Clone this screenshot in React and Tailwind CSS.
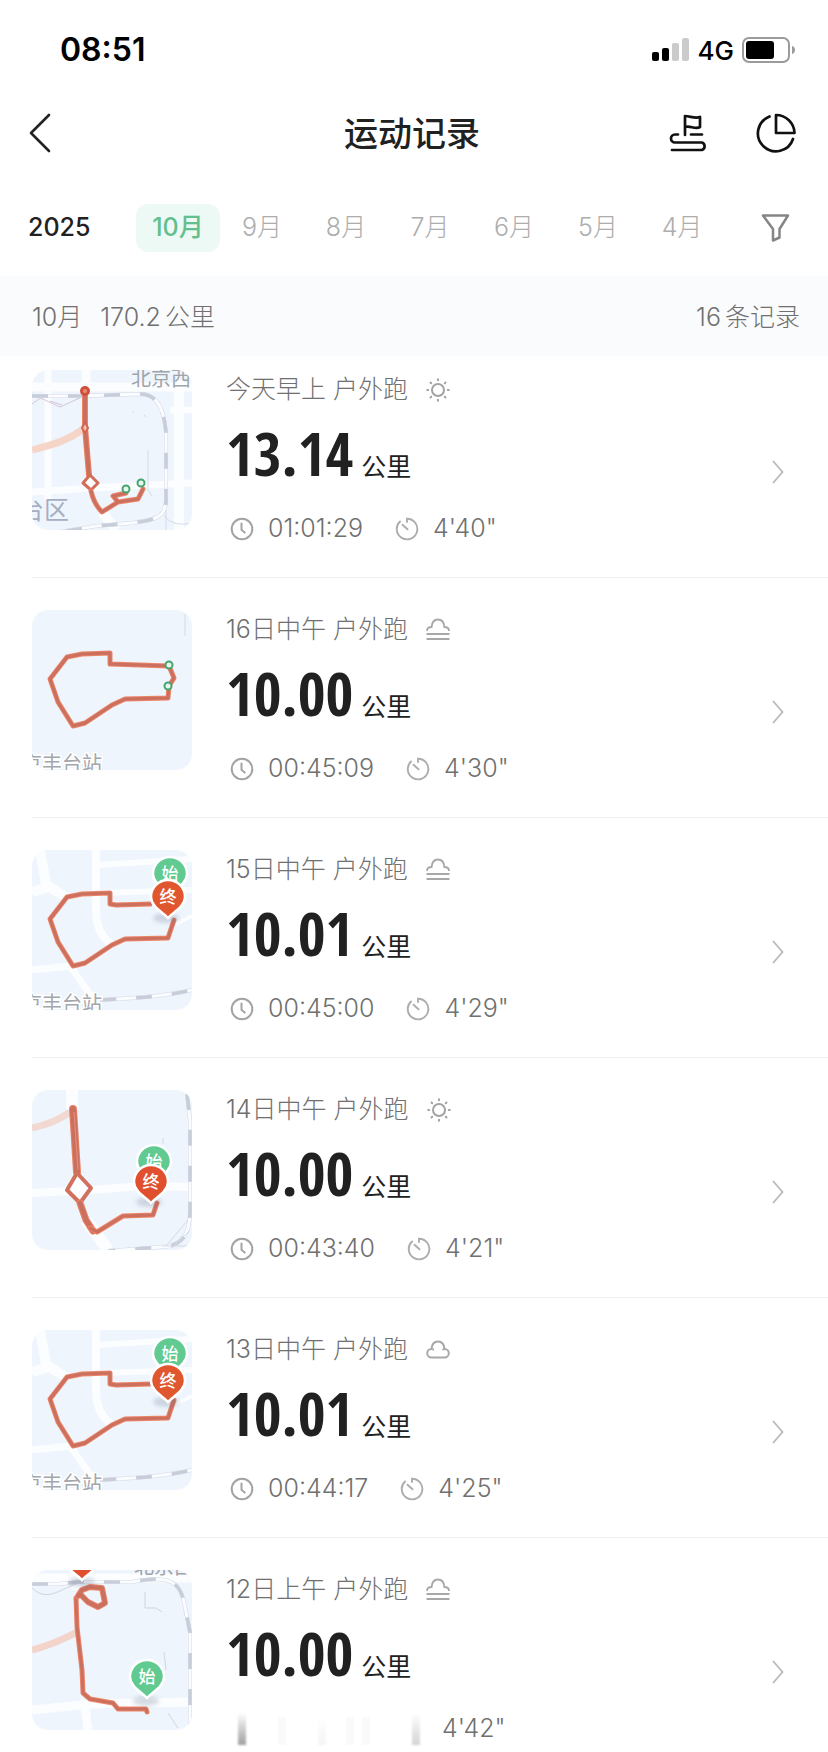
import React, { useState } from "react";

const MONTHS = ["10月", "9月", "8月", "7月", "6月", "5月", "4月"];

const LOOP =
  "M78 54V43L50 44L35 47L18 69L26 92L41 116L53 113L80 95L93 89L136 88";

const RECORDS = [
  { id: 1, when: "今天早上", weather: "sun", distance: "13.14", time: "01:01:29", pace: "4'40\"", map: "west" },
  { id: 2, when: "16日中午", weather: "haze", distance: "10.00", time: "00:45:09", pace: "4'30\"", map: "loopPlain" },
  { id: 3, when: "15日中午", weather: "haze", distance: "10.01", time: "00:45:00", pace: "4'29\"", map: "loop" },
  { id: 4, when: "14日中午", weather: "sun", distance: "10.00", time: "00:43:40", pace: "4'21\"", map: "south" },
  { id: 5, when: "13日中午", weather: "cloud", distance: "10.01", time: "00:44:17", pace: "4'25\"", map: "loopLow" },
  { id: 6, when: "12日上午", weather: "haze", distance: "10.00", time: null, pace: "4'42\"", map: "north" },
];

// -----------------------------
// Icons
// -----------------------------
function WeatherIcon({ type }) {
  if (type === "sun") {
    return (
      <svg className="size-6" viewBox="0 0 24 24" fill="none" stroke="#a3a3a3" strokeWidth="2" strokeLinecap="round">
        <circle cx="12" cy="12" r="6" />
        <path d="M12 1.2v1M12 21.8v1M1.2 12h1M21.8 12h1M4.5 4.5l.7.7M18.8 18.8l.7.7M19.5 4.5l-.7.7M5.2 18.8l-.7.7" />
      </svg>
    );
  }
  if (type === "cloud") {
    return (
      <svg className="size-6" viewBox="0 0 24 24" fill="none" stroke="#a8a8a8" strokeWidth="2" strokeLinejoin="round">
        <path d="M5.500 19.500a4.200 4.200 0 0 1 0-8.600C6 6 8.500 3.500 12 3.500S18 6 18.500 10.900a4.200 4.200 0 0 1 0 8.600ZM6.500 11.200l1.500.6M17.800 11.200l-1.300.6" />
      </svg>
    );
  }
  return (
    <svg className="size-6" viewBox="0 0 24 24" fill="none" stroke="#a8a8a8" strokeWidth="1.8">
      <path d="M1 13C1 10 3 9 5.600 9 6 4 8.500 1.500 12 1.500S18 4 18.400 9c2.600 0 4.600 1 4.600 4M.5 16h23M.5 21h23" />
    </svg>
  );
}

function ClockIcon() {
  return (
    <svg className="size-6" viewBox="0 0 24 24" fill="none" stroke="#a3a3a3" strokeWidth="2" strokeLinecap="round">
      <circle cx="12" cy="12" r="10.300" />
      <path d="M11.500 6.500v6.300l3.200 2.800" />
    </svg>
  );
}

function PaceIcon() {
  return (
    <svg className="size-6" viewBox="0 0 24 24" fill="none" stroke="#adadad" strokeWidth="1.900" strokeLinecap="round">
      <path d="M12 5V1.700A10.300 10.300 0 1 1 5 4.500M7.500 7.800l5 4.500" />
    </svg>
  );
}

// -----------------------------
// Map thumbnails
// -----------------------------
function Route({ d, width = 4 }) {
  return (
    <g fill="none" strokeLinecap="round" strokeLinejoin="round">
      <path d={d} stroke="#ec8468" strokeWidth={width + 1} />
      <path d={d} stroke="#cb705f" strokeWidth={width - 1} />
    </g>
  );
}

function Rail({ d }) {
  return (
    <g fill="none">
      <path d={d} stroke="#d3d8e3" strokeWidth="4" />
      <path d={d} stroke="#fbfcff" strokeWidth="3" />
      <path d={d} stroke="#c8cdda" strokeWidth="3.500" strokeDasharray="16 20" />
    </g>
  );
}

function Pin({ x, y, color, label }) {
  return (
    <g transform={`translate(${x} ${y})`}>
      <path
        d="M0 21C-4 16-17 10-17 0A17 17 0 0 1 17 0C17 10 4 16 0 21Z"
        fill={color}
        stroke="#fff"
        strokeWidth="2.500"
      />
      <text y="6" textAnchor="middle" fontSize="17" fontWeight="500" fill="#fff">
        {label}
      </text>
    </g>
  );
}

function Dot({ x, y }) {
  return <circle cx={x} cy={y} r="3.500" fill="#e6f7ec" stroke="#45a56f" strokeWidth="2" />;
}

function Shadow({ x, y }) {
  return <ellipse cx={x} cy={y} rx="13" ry="5" fill="#64748b" opacity=".25" className="blur-[2px]" />;
}

function StationLabel() {
  return (
    <text x="-10" y="161" fontSize="20" fill="#a3a6ab" stroke="#fff" strokeWidth="3" paintOrder="stroke">
      京丰台站
    </text>
  );
}

function LoopRoads() {
  return (
    <g fill="none" stroke="#fbfdff">
      <path d="M8 0L14 35L36 48M20 36L0 42" strokeWidth="10" />
      <path d="M64 0V60C64 80 72 90 82 96" strokeWidth="8" />
      <path d="M66 15L160 9M70 43L160 40" strokeWidth="6" />
      <path d="M0 120L38 116L62 150" strokeWidth="7" />
      <path d="M144 74L160 66" strokeWidth="4" />
    </g>
  );
}

function MapScene({ type }) {
  if (type === "west") {
    return (
      <>
        <g fill="none" stroke="#fcfdff">
          <path d="M0 17H160M54 0V25" strokeWidth="9" />
          <path d="M16 0V130M160 40H138M0 122L60 118L160 113" strokeWidth="7" />
          <path d="M147 10V160M70 142L84 160" strokeWidth="10" />
        </g>
        <path d="M0 80C20 75 38 70 52 58" fill="none" stroke="#f4d5c8" strokeWidth="7" />
        <path d="M0 24L28 37L52 26M0 34L14 24M18 31L30 35" fill="none" stroke="#d4c4d7" strokeWidth="1" />
        <Rail d="M0 26L48 26L108 24C128 24 132 44 134 62V130C134 148 122 150 100 153L64 156L28 162" />
        <path d="M132 145C138 155 150 155 160 153M134 140V160M100 41l2 2M112 45l2 2M116 80V120l4 6" fill="none" stroke="#d5dae6" strokeWidth="1" />
        <Route d="M53 21V57L57 105" width={5} />
        <path d="M58 105L66 113L59 120L51 113Z" fill="#fff" stroke="#d26d58" strokeWidth="3" strokeLinejoin="round" />
        <Route d="M59 121C61 130 65 137 70 142L86 132L106 129L111 119M86 132L81 126L94 123" width={4} />
        <circle cx="53" cy="21" r="3.500" fill="#e98d77" stroke="#cf4f3a" strokeWidth="3" />
        <path d="M53 52L56 58L53 63L50 58Z" fill="#f3c2b5" stroke="#d26550" strokeWidth="2" />
        <Dot x={94} y={119} />
        <Dot x={109} y={113} />
        <text x="99" y="16" fontSize="20" fill="#a0a4ab">北京西</text>
        <text x="-13" y="149" fontSize="25" fill="#a6aec2">台区</text>
      </>
    );
  }
  if (type === "loopPlain") {
    return (
      <>
        <Route d={LOOP + "L137 76L142 68L137 56L78 54"} />
        <path d="M153 4V26" stroke="#d5dae2" strokeWidth="1" />
        <Dot x={137} y={55} />
        <Dot x={136} y={76} />
        <StationLabel />
      </>
    );
  }
  if (type === "loop" || type === "loopLow") {
    const drop = type === "loopLow" ? 4 : 0;
    return (
      <>
        <LoopRoads />
        <Rail d="M68 150C100 148 130 147 160 140" />
        <Route d={LOOP + "L142 70M78 54L84 55L118 54"} />
        <Shadow x={134} y={68 + drop} />
        <Pin x={138} y={24} color="#61ca91" label="始" />
        <Pin x={136} y={47 + drop} color="#e0562f" label="终" />
        <StationLabel />
      </>
    );
  }
  if (type === "south") {
    return (
      <>
        <g fill="none" stroke="#fcfdff">
          <path d="M40 0V20M54 130L76 160" strokeWidth="12" />
          <path d="M0 103L60 100L110 96L160 97" strokeWidth="8" />
        </g>
        <path d="M0 38C14 35 26 31 38 22" fill="none" stroke="#f1d8d0" strokeWidth="7" />
        <Rail d="M155 4L158 30V120C158 145 150 156 130 157L76 161" />
        <path d="M156 130L134 156M158 140L140 158M130 156H160M131 48V54" fill="none" stroke="#d3d8e3" strokeWidth="1" />
        <Route d="M41 19L45 82" width={7} />
        <path d="M42 22L46 80" stroke="#e5937d" strokeWidth="1" />
        <path d="M45 83L59 98L48 113L35 100Z" fill="#fdfdff" stroke="#d0705d" strokeWidth="4" strokeLinejoin="round" />
        <Route d="M48 113L54 130L61 141" width={6} />
        <Route d="M58 138L65 142L91 126L121 125L125 113" />
        <Shadow x={117} y={112} />
        <Pin x={122} y={72} color="#61ca91" label="始" />
        <Pin x={119} y={92} color="#e0502f" label="终" />
      </>
    );
  }
  return (
    <>
      <g fill="none" stroke="#fcfdff">
        <path d="M0 140L60 134L160 132M0 8H160" strokeWidth="9" />
        <path d="M44 0V20M52 130L56 160" strokeWidth="9" />
      </g>
      <path d="M0 80C16 76 30 70 45 62" fill="none" stroke="#f2d4ca" strokeWidth="7" />
      <Rail d="M0 14H26L46 12H100C140 4 148 14 152 32L158 62V160" />
      <path d="M0 18C16 34 32 16 48 13M113 22V38H124L130 42M132 82L134 100M136 143L146 158" fill="none" stroke="#d0d5e1" strokeWidth="1" />
      <Route d="M44 28L45 57L50 100L51 123L58 129L81 133L86 139L114 139L115 142" />
      <Route d="M46 26L50 20L58 17L70 18L73 33L66 37L56 32L48 24" width={5} />
      <Shadow x={50} y={12} />
      <Pin x={50} y={-11} color="#e0502f" label="终" />
      <Shadow x={114} y={131} />
      <Pin x={115} y={107} color="#61ca91" label="始" />
      <text x="102" y="4" fontSize="20" fill="#a0a4ab">北京西</text>
    </>
  );
}

function RouteMap({ type }) {
  return (
    <div className="size-40 shrink-0 overflow-hidden rounded-2xl bg-[#eef5fd]">
      <svg className="size-40" viewBox="0 0 160 160" aria-hidden="true">
        <MapScene type={type} />
      </svg>
    </div>
  );
}

// Streaks shown while the duration is still fading in
function FadedTime() {
  return (
    <div className="flex h-8 w-[194px] items-end">
      <span className="ml-3 h-8 w-2 bg-linear-to-b from-white to-neutral-400 blur-[1px]" />
      <span className="ml-8 h-7 w-2 bg-neutral-50" />
      <span className="ml-8 h-7 w-2 bg-linear-to-b from-white to-neutral-100 blur-[1px]" />
      <span className="ml-5 h-7 w-2 bg-neutral-50" />
      <span className="ml-2 h-7 w-2 bg-neutral-50" />
      <span className="ml-auto h-8 w-2 bg-linear-to-b from-white to-neutral-300 blur-[1px]" />
    </div>
  );
}

function RecordRow({ record }) {
  return (
    <li className="ml-8 border-b border-[#f1f1f1] pt-8 first:pt-[14px] last:border-b-0">
      <a href="#" className="flex">
        <RouteMap type={record.map} />

        <div className="ml-[34px] flex-1 pb-[33px]">
          <div className="flex h-10 items-center text-[25px] font-light text-[#707070]">
            <span>{record.when} 户外跑</span>
            <span className="ml-[18px]">
              <WeatherIcon type={record.weather} />
            </span>
          </div>

          <div className="mt-[7px] flex h-[72px] items-baseline text-[#212121]">
            <span className="font-['Noto_Sans_ExtraCondensed','Open_Sans_Condensed','Roboto_Condensed',sans-serif] text-[60px] leading-[72px] font-bold">
              {record.distance}
            </span>
            <span className="ml-2 text-[25px]">公里</span>
          </div>

          <div className="mt-[25px] flex h-[30px] items-center text-[25px] font-light text-[#707070]">
            {record.time ? (
              <>
                <span className="ml-1"><ClockIcon /></span>
                <span className="ml-[14px]">{record.time}</span>
                <span className="ml-8"><PaceIcon /></span>
                <span className="ml-[14px]">{record.pace}</span>
              </>
            ) : (
              <>
                <FadedTime />
                <span className="ml-[22px]">{record.pace}</span>
              </>
            )}
          </div>
        </div>

        <svg className="mr-11 mb-1 h-6 w-3 self-center" viewBox="0 0 12 24" fill="none" stroke="#b8b8b8" strokeWidth="1.800">
          <path d="M1 1L10.500 12L1 23" />
        </svg>
      </a>
    </li>
  );
}

function StatusBar() {
  return (
    <div className="flex h-[100px] items-center justify-between pr-8 pl-[60px] text-black">
      <span className="text-[32px] font-semibold">08:51</span>
      <div className="flex items-center gap-2">
        <svg className="h-6 w-[38px]" viewBox="0 0 38 24">
          <rect x="0" y="14" width="7" height="9" rx="2" />
          <rect x="10" y="10" width="7" height="13" rx="2" />
          <rect x="20" y="5" width="7" height="18" rx="2" fill="#cbcbcb" />
          <rect x="30" y="0" width="7" height="23" rx="2" fill="#cbcbcb" />
        </svg>
        <span className="text-[26px] font-medium">4G</span>
        <svg className="h-[26px] w-[54px]" viewBox="0 0 54 26">
          <rect x="1" y="1" width="46" height="24" rx="6" fill="none" stroke="#9b9b9b" strokeWidth="2" />
          <rect x="4" y="4" width="28" height="18" rx="3" />
          <path d="M50 9c4 1 4 7 0 8Z" fill="#9b9b9b" />
        </svg>
      </div>
    </div>
  );
}

function App() {
  const [month, setMonth] = useState("10月");

  return (
    <div className="w-full overflow-hidden bg-white font-[Inter,'Noto_Sans_CJK_SC',sans-serif]">
      <StatusBar />

      {/* Title bar */}
      <header className="grid h-[66px] grid-cols-[1fr_auto_1fr] items-center pr-8 pl-7">
        <button type="button" aria-label="返回">
          <svg className="h-10 w-6" viewBox="0 0 24 40" fill="none" stroke="#222" strokeWidth="2.600" strokeLinecap="round" strokeLinejoin="round">
            <path d="M21 2L3 20L21 38" />
          </svg>
        </button>
        <h1 className="text-[34px] font-medium text-[#212121]">运动记录</h1>
        <div className="flex justify-end gap-12">
          <button type="button" aria-label="路线">
            <svg className="size-10" viewBox="0 0 40 40" fill="none" stroke="#111" strokeWidth="2.700" strokeLinecap="round" strokeLinejoin="round">
              <path d="M17 22V3C22 3 27 6 32 4V14C27 17 22 12 17 14M10 21.500H7A4 4 0 0 0 7 29.500H34A4 4 0 0 1 34 37H4M23 21.500H34" />
            </svg>
          </button>
          <button type="button" aria-label="统计">
            <svg className="size-10" viewBox="0 0 40 40" fill="none" stroke="#111" strokeWidth="2.700" strokeLinecap="round" strokeLinejoin="round">
              <path d="M20 2V20H38.500A18.500 18.500 0 0 0 20 2ZM13.500 3.500A18 18 0 1 0 37 26" />
            </svg>
          </button>
        </div>
      </header>

      {/* Month filter */}
      <nav className="flex h-[110px] items-center pt-[13px] pr-9 pl-7 text-[25px]">
        <button type="button" className="w-[108px] text-left font-medium text-[#212121]">2025</button>
        <div className="flex flex-1">
          {MONTHS.map((m) => (
            <button
              key={m}
              type="button"
              onClick={() => setMonth(m)}
              className={
                m === month
                  ? "h-12 flex-1 rounded-xl bg-[#edf9f4] font-medium text-[#63bf8e]"
                  : "h-12 flex-1 font-light text-[#adadad]"
              }
            >
              {m}
            </button>
          ))}
        </div>
        <button type="button" aria-label="筛选" className="ml-9">
          <svg className="h-8 w-8" viewBox="0 0 32 32" fill="none" stroke="#858585" strokeWidth="2.500" strokeLinejoin="round">
            <path d="M3 3.500H28L19.500 17V25.500L13 28.500V17Z" />
          </svg>
        </button>
      </nav>

      {/* Month summary */}
      <div className="flex h-20 items-center justify-between bg-[#fafbfd] pt-1 pr-7 pl-8 text-[25px] font-light text-[#707070]">
        <div className="flex gap-[18px]">
          <span>10月</span>
          <span className="flex gap-1">
            <span>170.2</span>
            <span>公里</span>
          </span>
        </div>
        <span className="flex gap-1">
          <span>16</span>
          <span>条记录</span>
        </span>
      </div>

      <ul>
        {RECORDS.map((record) => (
          <RecordRow key={record.id} record={record} />
        ))}
      </ul>
    </div>
  );
}

export default App;
